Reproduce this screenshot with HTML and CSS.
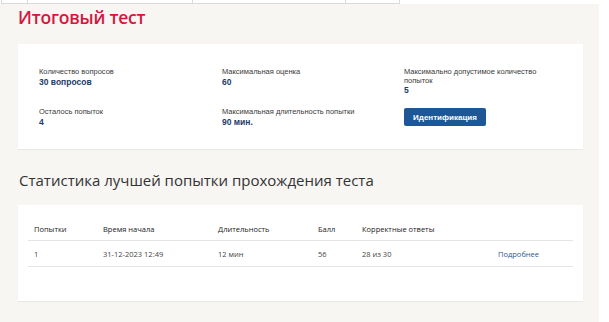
FILE: index.html
```html
<!DOCTYPE html>
<html lang="ru">

<head>
    <meta charset="UTF-8">
    <meta name="viewport" content="width=device-width, initial-scale=1.0">
    <title>Итоговый тест</title>
    <link rel="stylesheet" href="styles.css">
</head>

<body>

    <div class="page">
        <!-- Bottom edge of the header table -->
        <div class="top-strip">
            <div class="cell c1"></div>
            <div class="cell c2"></div>
            <div class="cell c3"></div>
            <div class="cell c4"></div>
        </div>

        <div class="content">
            <h1 class="page-title">Итоговый тест</h1>

            <!-- Test info -->
            <div class="card info-card">
                <div class="info-grid">
                    <div class="info-item">
                        <div class="info-label">Количество вопросов</div>
                        <div class="info-value">30 вопросов</div>
                    </div>
                    <div class="info-item">
                        <div class="info-label">Максимальная оценка</div>
                        <div class="info-value">60</div>
                    </div>
                    <div class="info-item">
                        <div class="info-label">Максимально допустимое количество<br>попыток</div>
                        <div class="info-value">5</div>
                    </div>
                    <div class="info-item">
                        <div class="info-label">Осталось попыток</div>
                        <div class="info-value">4</div>
                    </div>
                    <div class="info-item">
                        <div class="info-label">Максимальная длительность попытки</div>
                        <div class="info-value">90 мин.</div>
                    </div>
                    <div class="info-item">
                        <button class="btn-primary">Идентификация</button>
                    </div>
                </div>
            </div>

            <h2 class="section-title">Статистика лучшей попытки прохождения теста</h2>

            <!-- Best attempt -->
            <div class="card stats-card">
                <table class="stats-table">
                    <thead>
                        <tr>
                            <th class="col-try">Попытки</th>
                            <th class="col-start">Время начала</th>
                            <th class="col-dur">Длительность</th>
                            <th class="col-score">Балл</th>
                            <th class="col-correct">Корректные ответы</th>
                            <th></th>
                        </tr>
                    </thead>
                    <tbody>
                        <tr>
                            <td>1</td>
                            <td>31-12-2023 12:49</td>
                            <td>12 мин</td>
                            <td>56</td>
                            <td>28 из 30</td>
                            <td><a href="#" class="more-link">Подробнее</a></td>
                        </tr>
                    </tbody>
                </table>
            </div>
        </div>
    </div>

</body>

</html>
```

FILE: styles.css
```css
* {
    margin: 0;
    padding: 0;
    box-sizing: border-box;
}

body {
    font-family: 'Open Sans', sans-serif;
    background-color: #ffffff;
    color: #333333;
}

.page {
    width: 609px;
    height: 322px;
    overflow: hidden;
}

.top-strip {
    display: flex;
    height: 4px;
    width: 400px;
}

.top-strip .cell {
    border-left: 1px solid #d9d9d5;
    border-bottom: 1px solid #d9d9d5;
}

.top-strip .c1 {
    width: 26px;
    margin-left: 1px;
}

.top-strip .c2 {
    width: 165px;
}

.top-strip .c3 {
    width: 153px;
}

.top-strip .c4 {
    width: 55px;
    border-right: 1px solid #d9d9d5;
}

.content {
    width: 599px;
    height: 318px;
    background-color: #f7f6f3;
    padding: 0 16px 0 18px;
}

.page-title {
    font-family: 'Open Sans', sans-serif;
    font-size: 17.5px;
    font-weight: 600;
    line-height: 24px;
    color: #d5173e;
    padding-top: 1px;
    letter-spacing: -0.2px;
}

.card {
    background-color: #ffffff;
    box-shadow: 0 1px 1px rgba(0, 0, 0, 0.05);
}

.info-card {
    margin-top: 15px;
    padding: 24px 0 22px 21px;
}

.info-grid {
    display: grid;
    grid-template-columns: 183px 182px 1fr;
    row-gap: 13px;
}

.info-label {
    font-family: 'Liberation Sans', Arial, sans-serif;
    font-size: 7.5px;
    line-height: 8.5px;
    color: #3a3a3a;
}

.info-value {
    font-family: 'Liberation Sans', Arial, sans-serif;
    font-size: 8.5px;
    line-height: 10px;
    font-weight: 700;
    color: #1c3b69;
}

.btn-primary {
    display: block;
    font-family: 'Liberation Sans', Arial, sans-serif;
    width: 82px;
    height: 18px;
    background-color: #1d5795;
    color: #ffffff;
    border: none;
    border-radius: 2px;
    font-size: 8px;
    font-weight: 700;
    cursor: pointer;
}

.section-title {
    font-size: 15px;
    font-weight: 400;
    line-height: 20px;
    color: #333333;
    margin-top: 21px;
    padding-left: 1px;
}

.stats-card {
    margin-top: 15px;
    height: 96px;
    padding: 14px 10px 0 10px;
}

.stats-table {
    width: 100%;
    border-collapse: collapse;
    font-size: 7.5px;
    text-align: left;
}

.stats-table th {
    font-weight: 400;
    color: #222222;
    height: 22px;
    padding: 0 6px;
    border-bottom: 1px solid #e4e4e4;
}

.stats-table td {
    height: 26px;
    padding: 0 6px;
    color: #444444;
    border-bottom: 1px solid #e4e4e4;
}

.col-try {
    width: 69px;
}

.col-start {
    width: 115px;
}

.col-dur {
    width: 100px;
}

.col-score {
    width: 44px;
}

.col-correct {
    width: 136px;
}

.more-link {
    color: #2d5b8c;
    text-decoration: none;
}
```
